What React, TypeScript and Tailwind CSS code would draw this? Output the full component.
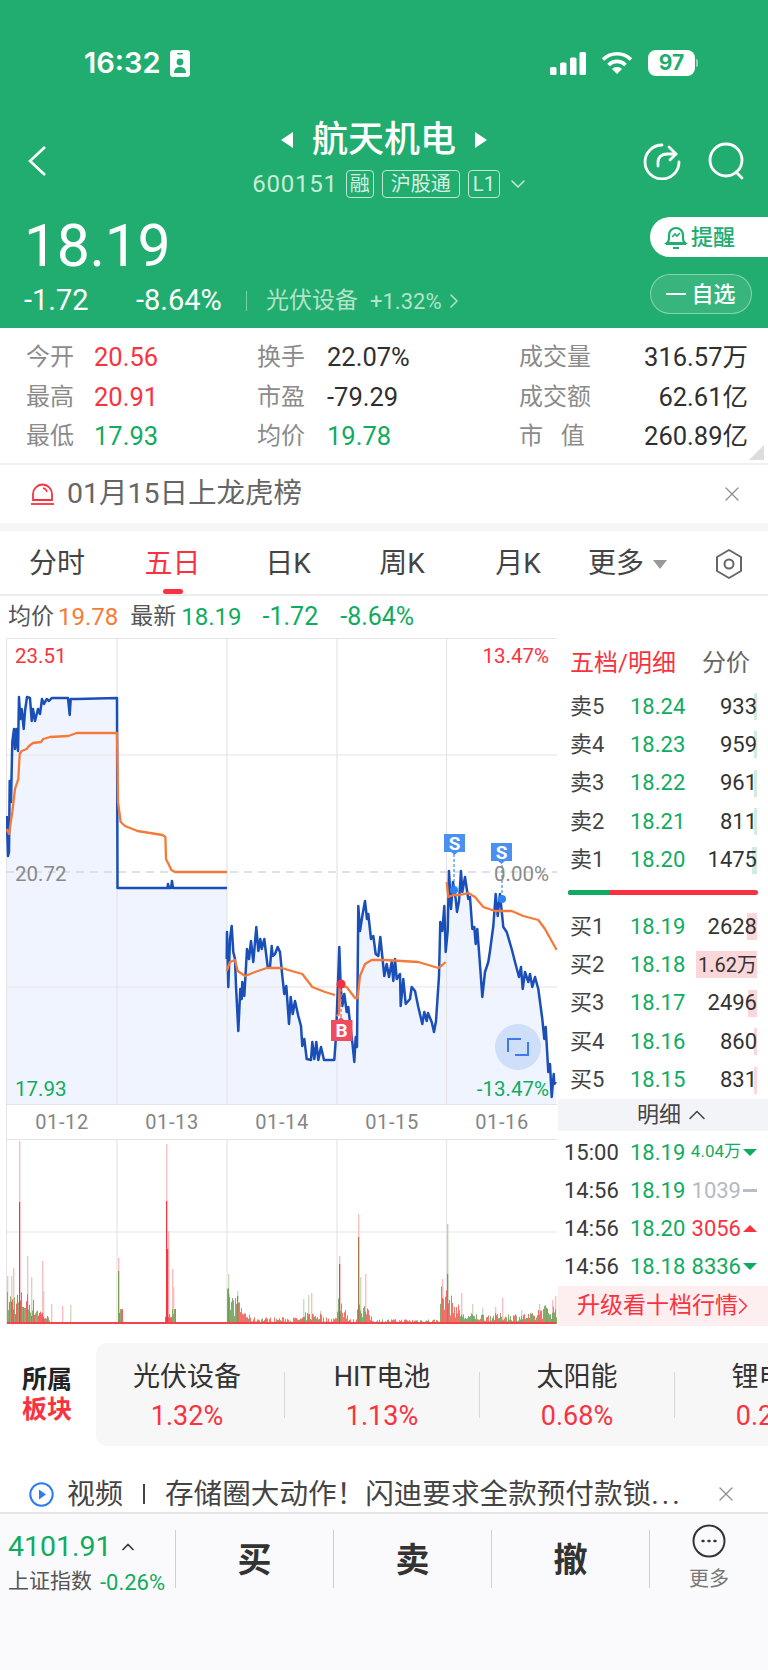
import { ChevronDown, ChevronRight, ChevronUp, X } from "lucide-react";

const RED = "text-[#fa3240]";
const GREEN = "text-[#0fac60]";

const blueA =
  "6.7,817 8,857 9,853 9.7,782 11,803 12.3,743 14,730 15,750 16.3,730 18,752 19,698 20.3,720 21.7,710 23.7,730 25,712 27,698 30,699 31.7,722 33,710 35,722 38,710 40,715 42,700 44,705 46.7,700 49,702 51.7,699 68,699 69.7,716 70.7,700 77,700 117,699 117.5,889 167.5,889 168,885 169,889 171,889 172,882 173,889 227,889";
const blueB =
  "226.7,960 227,933 228.3,988 230,940 231.7,927 233.3,953 235,960 236,987 238.3,1032 240.3,990 241.7,1000 242.3,983 244.3,997 247,950 249,960 251,942 253.3,963 256.3,928 258.3,952 260.3,940 261.7,950 264.3,940 267.7,968 270,968 271.7,947 272.7,957 275,955 277.7,948 280,953 282.3,977 284.3,995 286.3,987 289,1025 290.7,998 292.7,1015 295,1002 298.3,1017 301,1027 302.3,1047 304.3,1040 306.7,1060 311,1061 312.3,1043 314.3,1060 316.3,1043 318.3,1061 321,1048 324,1061 334.3,1061 336,1037 339.3,948 340.7,987 342.3,1007 344.3,995 346.7,1013 348.3,1008 351,1033 352.3,1043 354.3,1063 355.7,1038 357,1048 358.3,907 360,932 362.3,917 365,902 367,920 368.3,915 371,940 373.3,937 375.7,955 378.3,957 380.3,938 384.3,977 386.7,965 389,978 391.7,963 393.3,982 395,960 396.7,980 400,975 400.7,1007 403.3,980 405.7,1005 410,1000 411.7,988 415,992 418.3,1008 422.3,1025 424.3,1013 426.7,1022 428,1014 431.7,1023 434,1033 436,1022 439,977 440.3,923 442.3,932 444.3,907 445.7,953 447.7,932 449,872 451,910 453,883 455.7,900 457,913 459,902 461,872 462.3,893 465,878 468.3,900 470,898 472.3,930 474.3,928 475.7,945 477.3,930 480.3,970 482.3,998 485,973 488.3,963 490,952 493.3,927 495.7,895 497.7,917 500,895 503.3,928 506.7,933 511.7,950 515,963 519,978 521,968 522.7,990 525,973 528.3,983 530,975 532.3,988 535,978 538.3,990 542.3,1020 544.3,1040 545.7,1028 548.3,1073 550,1065 551.7,1098 553.7,1075 554.3,1085 556,1083";
const avgLines = [
  "6.7,830 9,835 12.3,813 15,790 18.3,780 19.7,755 21.7,752 26.7,750 29,747 33,744 41,743 43.3,740 50,738 68.3,737 76.7,734 117,734 118,803 120.7,823 125,827 137.5,832 162.5,836 165.4,838 166,860 171.4,871 175,873 227,873",
  "226.7,972 230,963 235,961 237.7,972 245,977 255,973 266.7,969 281.7,969 291.7,972 302.3,975 312.3,988 325,993 335,996",
  "336.7,1017 339,1015 339.5,987 346.7,988 355,999 357.7,999 360,977 365,965 371.7,961 385,961 418.3,963 438.3,969 442.3,966 445.7,963",
  "446.7,883 448.3,898 453.3,896 460,896 468.3,894 475,898 483.3,908 495,912 511.7,912 523.3,917 538.3,921 545,930 556.7,951",
];

const dayLines = [117, 227, 337, 446.5];

function area(line: string) {
  const p = line.split(" ");
  const first = p[0].split(",")[0];
  const last = p[p.length - 1].split(",")[0];
  return `M${first},1106 L${p.join(" L")} L${last},1106 Z`;
}

// rough volume envelope per x, noise is seeded so the picture stays stable
function envelope(x: number) {
  if (x < 26) return 34;
  if (x < 52) return 34 - (x - 26) * 1.2;
  if (x >= 118 && x < 123) return 16;
  if (x >= 165 && x < 176) return 16;
  if (x >= 227 && x < 250) return 38 - (x - 227) * 1.3;
  if (x >= 250 && x < 337) return x > 303 && x < 322 ? 12 : 7;
  if (x >= 337 && x < 348) return 38 - (x - 337) * 2.4;
  if (x >= 357 && x < 372) return 32 - (x - 357) * 1.6;
  if (x >= 348 && x < 440) return 5;
  if (x >= 440 && x < 462) return 42 - (x - 440) * 1.2;
  if (x >= 462 && x < 538) return 11;
  if (x >= 538) return 20;
  return 0;
}

let seed = 7;
function rnd() {
  seed = (seed * 16807) % 2147483647;
  return seed / 2147483647;
}

const noiseBars: { x: number; h: number; c: string }[] = [];
for (let x = 7; x < 557; x += 1) {
  const env = envelope(x);
  if (env <= 0) continue;
  const r = rnd();
  const c = x < 227 ? (r < 0.45 ? "#7f9f55" : "#f0474c") : r < 0.55 ? "#6f9c55" : "#ee5a50";
  noiseBars.push({ x, h: env * (0.25 + rnd() * 0.75), c });
}

const lightSpikes: [number, number, string][] = [
  [19, 183, "#fdbdc0"], [27, 68, "#fdbdc0"], [42, 63, "#fdbdc0"], [31, 47, "#c9dcc0"], [43, 33, "#c9dcc0"],
  [51, 20, "#fdbdc0"], [62, 18, "#fdbdc0"], [70, 19, "#c9dcc0"], [11, 48, "#c9dcc0"], [13, 56, "#fdbdc0"],
  [7, 48, "#fdbdc0"], [118, 66, "#fdbdc0"], [166, 180, "#fdbdc0"], [168, 93, "#fdbdc0"], [172, 55, "#fdbdc0"],
  [173, 37, "#fdbdc0"], [228, 50, "#c9dcc0"], [237, 33, "#c9dcc0"], [303, 25, "#c9dcc0"], [308, 29, "#c9dcc0"],
  [311, 31, "#fdbdc0"], [320, 13, "#c9dcc0"], [339, 68, "#fdbdc0"], [358, 110, "#fdbdc0"], [360, 47, "#c9dcc0"],
  [365, 50, "#fdbdc0"], [447, 100, "#b9d4ab"], [442, 45, "#fdbdc0"], [461, 31, "#fdbdc0"], [502, 26, "#fdbdc0"],
  [495, 17, "#fdbdc0"], [472, 20, "#c9dcc0"], [482, 16, "#c9dcc0"], [521, 14, "#c9dcc0"], [539, 20, "#c9dcc0"],
  [546, 15, "#fdbdc0"], [552, 24, "#fdbdc0"], [555, 28, "#fdbdc0"],
];
const solidSpikes: [number, number, string][] = [
  [19, 122, "#f23a3f"], [118, 53, "#7f9f55"], [166, 123, "#f8343f"], [167, 75, "#f8343f"], [339, 60, "#ef4044"],
  [358, 87, "#a8744a"], [447, 50, "#6f9c55"], [237, 28, "#6f9c55"], [228, 30, "#6f9c55"],
];

function StatusBar() {
  return (
    <div className="flex items-center justify-between pl-[84px] pr-[70px] pt-[48px] text-white">
      <div className="flex items-center gap-[9px]">
        <span className="text-[29px] leading-[30px] font-semibold [font-family:Inter,sans-serif]">16:32</span>
        <svg width="20" height="27" viewBox="0 0 20 27">
          <rect width="20" height="27" rx="3.5" fill="#fff" />
          <rect x="7" y="3" width="6" height="1.6" rx="0.8" fill="#21ad6f" />
          <circle cx="10" cy="12" r="3.4" fill="#21ad6f" />
          <path d="M4 23c0-4 2.5-6 6-6s6 2 6 6z" fill="#21ad6f" />
        </svg>
      </div>
      <div className="flex items-center gap-[15px]">
        <svg width="36" height="23" viewBox="0 0 36 23" fill="#fff">
          <rect x="0" y="15" width="6.5" height="8" rx="1.6" />
          <rect x="10" y="10.5" width="6.5" height="12.5" rx="1.6" />
          <rect x="20" y="5.5" width="6.5" height="17.5" rx="1.6" />
          <rect x="29.5" y="0" width="6.5" height="23" rx="1.6" />
        </svg>
        <svg width="32" height="24" viewBox="0 0 32 24" fill="none" stroke="#fff" strokeWidth="3.6">
          <path d="M2 8.5c8-7.6 20-7.6 28 0" />
          <path d="M7.5 14c5-4.8 12-4.8 17 0" />
          <path d="M16 23l-5-5c2.8-2.6 7.2-2.6 10 0z" fill="#fff" stroke="none" />
        </svg>
        <div className="flex items-center gap-[1px]">
          <div className="w-[47px] h-[26px] rounded-[8px] bg-white flex items-center justify-center text-[#21ad6f] text-[21px] font-bold [font-family:Inter,sans-serif]">
            97
          </div>
          <div className="w-[2px] h-[8px] rounded-r bg-white/50" />
        </div>
      </div>
    </div>
  );
}

function Tag({ children }: { children: React.ReactNode }) {
  return (
    <span className="h-[28px] px-[3px] border border-[#c3e6d3] rounded-[4px] flex items-center text-[20px] leading-none text-[#d5f0e2]">
      {children}
    </span>
  );
}

function Header() {
  return (
    <header className="h-[328px] bg-[#21ad6f] text-white shrink-0">
      <StatusBar />
      <div className="flex items-center h-[92px] mt-[33px]">
        <div className="w-[130px] pl-[26px] mt-[8px]">
          <svg width="22" height="32" viewBox="0 0 22 32" fill="none" stroke="#fff" strokeWidth="2.6">
            <path d="M19 2L4 16l15 14" />
          </svg>
        </div>
        <div className="flex-1 flex flex-col items-center">
          <div className="flex items-center gap-[19px] h-[48px]">
            <span className="w-0 h-0 border-y-[8px] border-y-transparent border-r-[12px] border-r-white" />
            <span className="text-[36px] leading-[44px] font-medium">航天机电</span>
            <span className="w-0 h-0 border-y-[8px] border-y-transparent border-l-[12px] border-l-white" />
          </div>
          <div className="flex items-center gap-[8px] h-[30px] mt-[5px] pl-[14px] text-[#c9ecd9] whitespace-nowrap">
            <span className="text-[24px] leading-none tracking-[0.8px]">600151</span>
            <Tag>融</Tag>
            <Tag>
              <span className="px-[5px]">沪股通</span>
            </Tag>
            <Tag>
              <span className="px-[1px]">L1</span>
            </Tag>
            <ChevronDown size={24} strokeWidth={1.5} className="-ml-[2px]" />
          </div>
        </div>
        <div className="w-[130px] flex items-center justify-end gap-[27px] pr-[22px] mt-[8px]">
          <svg width="38" height="38" viewBox="0 0 38 38" fill="none" stroke="#fff" strokeWidth="2.8" strokeLinecap="round">
            <path d="M36 20a17 17 0 1 1-17-17" />
            <path d="M15 24v-4c0-5 4-8 9-8h7" />
            <path d="M26 5l7 7-6 6" />
          </svg>
          <svg width="38" height="38" viewBox="0 0 38 38" fill="none" stroke="#fff" strokeWidth="2.8" strokeLinecap="round">
            <circle cx="18" cy="18" r="16" />
            <path d="M28 30l6 6" />
          </svg>
        </div>
      </div>
      <div className="flex justify-between items-start">
        <div className="pl-[24px] pt-[10px]">
          <div className="text-[59px] leading-[66px] tracking-[-0.4px]">18.19</div>
          <div className="flex items-center h-[36px] mt-[4px]">
            <span className="text-[29px] w-[112px]">-1.72</span>
            <span className="text-[29px] w-[110px]">-8.64%</span>
            <span className="w-px h-[20px] bg-white/40" />
            <span className="ml-[19px] text-[23px] text-[#b4e2ca]">光伏设备</span>
            <span className="ml-[12px] text-[22px] text-[#b4e2ca]">+1.32%</span>
            <ChevronRight size={24} strokeWidth={1.5} className="text-[#b4e2ca]" />
          </div>
        </div>
        <div className="flex flex-col items-end pt-[14px]">
          <div className="w-[118px] h-[40px] bg-white rounded-l-[20px] flex items-center pl-[14px] gap-[3px] text-[#21ad6f] text-[22px] font-medium">
            <svg width="24" height="26" viewBox="0 0 24 26" fill="none" stroke="#21ad6f" strokeWidth="2.2">
              <path d="M3 19c2-1.5 2-3 2-8a7 7 0 0 1 14 0c0 5 0 6.5 2 8z" />
              <path d="M2 20h20M9 24h6" />
              <path d="M8 13l3-3 2 2 3-3" strokeWidth="1.6" />
            </svg>
            提醒
          </div>
          <div className="w-[102px] h-[40px] mr-[16px] mt-[17px] border border-white/40 bg-white/10 rounded-[20px] flex items-center justify-center text-[22px] font-medium">
            <span className="w-[20px] h-[2px] bg-white mr-[5px]" />
            自选
          </div>
        </div>
      </div>
    </header>
  );
}

function Stat({ label, value, color, labelW, valueRight }: { label: string; value: string; color: string; labelW: string; valueRight?: boolean }) {
  return (
    <div className="flex items-center h-[39.8px]">
      <span className={`${labelW} text-[24px] text-[#8b8b8b] whitespace-pre`}>{label}</span>
      <span className={`text-[25.5px] ${color} ${valueRight ? "flex-1 text-right" : ""}`}>{value}</span>
    </div>
  );
}

function Stats() {
  const col = "flex flex-col";
  return (
    <section className="relative h-[137px] border-b-2 border-[#f0f0f0] pt-[9px] pl-[26px] pr-[20px] flex shrink-0">
      <div className={`${col} w-[231px]`}>
        <Stat label="今开" value="20.56" color={RED} labelW="w-[68px]" />
        <Stat label="最高" value="20.91" color={RED} labelW="w-[68px]" />
        <Stat label="最低" value="17.93" color={GREEN} labelW="w-[68px]" />
      </div>
      <div className={`${col} w-[262px]`}>
        <Stat label="换手" value="22.07%" color="text-[#2f2f2f]" labelW="w-[70px]" />
        <Stat label="市盈" value="-79.29" color="text-[#2f2f2f]" labelW="w-[70px]" />
        <Stat label="均价" value="19.78" color={GREEN} labelW="w-[70px]" />
      </div>
      <div className={`${col} flex-1`}>
        <Stat label="成交量" value="316.57万" color="text-[#2f2f2f]" labelW="w-[90px]" valueRight />
        <Stat label="成交额" value="62.61亿" color="text-[#2f2f2f]" labelW="w-[90px]" valueRight />
        <Stat label={"市   值"} value="260.89亿" color="text-[#2f2f2f]" labelW="w-[90px]" valueRight />
      </div>
      <span className="absolute right-[4px] bottom-[3px] w-0 h-0 border-l-[15px] border-l-transparent border-b-[15px] border-b-[#dcdcdc]" />
    </section>
  );
}

function Notice() {
  return (
    <div className="h-[58px] flex items-center pl-[30px] pr-[24px] border-b-[8px] border-[#f5f6f8] box-content shrink-0">
      <svg width="25" height="26" viewBox="0 0 25 26" fill="none" stroke="#fa3240" strokeWidth="1.8">
        <path d="M3 19v-6a9.5 9.5 0 0 1 19 0v6z" />
        <path d="M1 23h23" />
        <path d="M13 7c2 .5 3.5 2 4 4" strokeWidth="1.4" />
      </svg>
      <span className="ml-[12px] pt-[1px] text-[28.5px] text-[#666]">01月15日上龙虎榜</span>
      <X size={24} strokeWidth={1.3} className="ml-auto text-[#8e8e8e]" />
    </div>
  );
}

function Tabs() {
  const items: [string, string][] = [
    ["分时", "w-[112px]"],
    ["五日", "w-[119px]"],
    ["日K", "w-[112px]"],
    ["周K", "w-[116px]"],
    ["月K", "w-[116px]"],
  ];
  return (
    <div className="h-[60px] pt-[3px] flex items-center border-b-2 border-[#ececec] pl-[1px] text-[28px] text-[#444] shrink-0 box-content">
      {items.map(([t, w], i) => (
        <div key={t} className={`${w} relative h-full flex items-center justify-center ${i === 1 ? RED : ""}`}>
          {t}
          {i === 1 && <span className="absolute bottom-0 w-[20px] h-[5px] rounded-full bg-[#fa3240]" />}
        </div>
      ))}
      <div className="flex items-center ml-[2px]">
        <span className="ml-[10px]">更多</span>
        <span className="ml-[9px] w-0 h-0 border-x-[7px] border-x-transparent border-t-[9px] border-t-[#999]" />
      </div>
      <svg width="28" height="32" viewBox="0 0 28 32" fill="none" stroke="#666" strokeWidth="2" className="ml-[48px]">
        <path d="M14 2l12 7v14l-12 7-12-7V9z" strokeLinejoin="round" />
        <circle cx="14" cy="16" r="4.5" />
      </svg>
    </div>
  );
}

function Summary() {
  return (
    <div className="h-[42px] flex items-center pl-[8px] text-[23px] shrink-0">
      <span className="text-[#555]">均价</span>
      <span className="ml-[4px] text-[24px] text-[#f47c36]">19.78</span>
      <span className="ml-[12px] text-[#555]">最新</span>
      <span className={`ml-[5px] text-[24px] ${GREEN}`}>18.19</span>
      <span className={`ml-[21px] text-[25px] ${GREEN}`}>-1.72</span>
      <span className={`ml-[22px] text-[25px] ${GREEN}`}>-8.64%</span>
    </div>
  );
}

function PriceChart() {
  return (
    <div className="relative h-[467px]">
      <svg width="551" height="467" viewBox="6 639 551 467" className="block">
        <path d={area(blueA)} fill="#f0f4fe" />
        <path d={area(blueB)} fill="#f0f4fe" />
        <g stroke="#e4e4e4" strokeWidth="1.2">
          <path d="M6.5 639V1106M6 639.5H557M6 756H557M6 988H557M6 1105.5H557" fill="none" />
          {dayLines.map((x) => (
            <line key={x} x1={x} x2={x} y1="639" y2="1106" />
          ))}
        </g>
        <line x1="6" x2="557" y1="873" y2="873" stroke="#d3d8e0" strokeWidth="1.3" strokeDasharray="8 6" />
        <polyline points={blueA} fill="none" stroke="#1a4fb8" strokeWidth="2.5" strokeLinejoin="round" />
        <polyline points={blueB} fill="none" stroke="#1a4fb8" strokeWidth="2.5" strokeLinejoin="round" />
        {avgLines.map((l) => (
          <polyline key={l} points={l} fill="none" stroke="#f57a3a" strokeWidth="2.3" strokeLinejoin="round" />
        ))}
        <circle cx="518" cy="1048" r="23" fill="#c9d9f8" fillOpacity="0.85" />
        <path d="M508 1053v-13h13M528 1043v13h-13" fill="none" stroke="#3d7bea" strokeWidth="2" />
        <line x1="341" x2="341" y1="985" y2="1022" stroke="#f6626f" strokeWidth="1.3" strokeDasharray="3 2" />
        <circle cx="341" cy="985" r="4.5" fill="#f52f40" />
        <path d="M331 1021h7l3-3 3 3h8.5v21H331z" fill="#f04c5f" />
        <text x="341.5" y="1038" textAnchor="middle" fill="#fff" fontSize="19" fontWeight="700">B</text>
        <line x1="454" x2="454" y1="855" y2="891" stroke="#3d8bf5" strokeWidth="1.2" strokeDasharray="3 2" />
        <circle cx="454" cy="891" r="4" fill="#2c83f2" />
        <path d="M444 835h21v18h-7l-3.5 3-3.5-3h-7z" fill="#4a90f0" />
        <text x="454.5" y="851" textAnchor="middle" fill="#fff" fontSize="19" fontWeight="700">S</text>
        <line x1="502" x2="502" y1="866" y2="900" stroke="#3d8bf5" strokeWidth="1.2" strokeDasharray="3 2" />
        <circle cx="502" cy="900" r="4" fill="#2c83f2" />
        <path d="M491 844h21v18h-7l-3.5 3-3.5-3h-7z" fill="#4a90f0" />
        <text x="501.5" y="860" textAnchor="middle" fill="#fff" fontSize="19" fontWeight="700">S</text>
      </svg>
      <span className={`absolute left-[9px] top-[3px] text-[20.5px] ${RED}`}>23.51</span>
      <span className={`absolute right-[9px] top-[3px] text-[20.5px] ${RED}`}>13.47%</span>
      <span className="absolute left-[9px] top-[221px] text-[20.5px] text-[#8a8a8a]">20.72</span>
      <span className="absolute right-[9px] top-[221px] text-[20.5px] text-[#8a8a8a]">0.00%</span>
      <span className={`absolute left-[9px] bottom-0 text-[20.5px] ${GREEN}`}>17.93</span>
      <span className={`absolute right-[9px] bottom-0 text-[20.5px] ${GREEN}`}>-13.47%</span>
    </div>
  );
}

function VolumeChart() {
  return (
    <svg width="551" height="185" viewBox="6 1141 551 185" className="block">
      <g stroke="#e6e6e6" strokeWidth="1.2">
        <path d="M6.5 1141V1325M6 1233H557" fill="none" />
        {dayLines.map((x) => (
          <line key={x} x1={x} x2={x} y1="1141" y2="1325" />
        ))}
      </g>
      {lightSpikes.map(([x, h, c]) => (
        <rect key={`l${x}`} x={x} y={1325 - h} width="1.4" height={h} fill={c} />
      ))}
      {noiseBars.map((b) => (
        <rect key={b.x} x={b.x} y={1325 - b.h} width="1" height={b.h} fill={b.c} fillOpacity="0.85" />
      ))}
      {solidSpikes.map(([x, h, c]) => (
        <rect key={`s${x}`} x={x} y={1325 - h} width="1.2" height={h} fill={c} />
      ))}
      <rect x="7" y="1323" width="549" height="2" fill="#f4434a" />
    </svg>
  );
}

function LeftPanel() {
  const dates = ["01-12", "01-13", "01-14", "01-15", "01-16"];
  return (
    <div className="w-[558px] pl-[6px] shrink-0">
      <PriceChart />
      <div className="h-[35px] w-[551px] flex border-l border-[#e4e4e4] border-b border-b-[#e4e4e4]">
        {dates.map((d) => (
          <div key={d} className="w-[110px] text-center text-[20px] leading-[34px] tracking-[0.6px] text-[#858585]">
            {d}
          </div>
        ))}
      </div>
      <VolumeChart />
    </div>
  );
}

function QuoteRow({ label, price, vol, bar, sell, small }: { label: string; price: string; vol: string; bar: number; sell: boolean; small?: boolean }) {
  return (
    <div className="relative h-[38.4px] flex items-center pl-[12px] pr-[11px] text-[22px]">
      <span
        className={`absolute right-[11px] top-[6px] h-[27px] ${sell ? "bg-[#d3ebdd]" : "bg-[#fbd7d9]"}`}
        style={{ width: bar }}
      />
      <span className="relative w-[60px] text-[#444]">{label}</span>
      <span className={`relative ${GREEN}`}>{price}</span>
      <span className={`relative ml-auto text-[#333] ${small ? "text-[20px]" : ""}`}>{vol}</span>
    </div>
  );
}

function TickRow({ time, price, vol, color, mark, small }: { time: string; price: string; vol: string; color: string; mark: "down" | "up" | "flat"; small?: boolean }) {
  return (
    <div className="h-[38.3px] flex items-center pl-[6px] pr-[11px] text-[22px]">
      <span className="w-[66px] text-[#3a3a3a]">{time}</span>
      <span className={GREEN}>{price}</span>
      <span className={`ml-auto ${color} ${small ? "text-[17px]" : ""}`}>{vol}</span>
      {mark === "down" && <span className="ml-[2px] w-0 h-0 border-x-[7px] border-x-transparent border-t-[7px] border-t-[#0fac60]" />}
      {mark === "up" && <span className="ml-[2px] w-0 h-0 border-x-[7px] border-x-transparent border-b-[7px] border-b-[#fa3240]" />}
      {mark === "flat" && <span className="ml-[2px] w-[14px] h-[3px] bg-[#b9bec6]" />}
    </div>
  );
}

function RightPanel() {
  return (
    <div className="flex-1 flex flex-col">
      <div className="h-[49px] flex items-center justify-between pl-[12px] pr-[18px] text-[24px] shrink-0">
        <span className={RED}>五档/明细</span>
        <span className="text-[#666]">分价</span>
      </div>
      <div>
        <QuoteRow label="卖5" price="18.24" vol="933" bar={3} sell />
        <QuoteRow label="卖4" price="18.23" vol="959" bar={3} sell />
        <QuoteRow label="卖3" price="18.22" vol="961" bar={3} sell />
        <QuoteRow label="卖2" price="18.21" vol="811" bar={3} sell />
        <QuoteRow label="卖1" price="18.20" vol="1475" bar={5} sell />
      </div>
      <div className="h-[5px] mx-[10px] mt-[11px] mb-[12px] rounded-full bg-[#fa3240] overflow-hidden shrink-0">
        <div className="h-full w-[42px] bg-[#0fac60]" />
      </div>
      <div>
        <QuoteRow label="买1" price="18.19" vol="2628" bar={10} sell={false} />
        <QuoteRow label="买2" price="18.18" vol="1.62万" bar={61} sell={false} small />
        <QuoteRow label="买3" price="18.17" vol="2496" bar={9} sell={false} />
        <QuoteRow label="买4" price="18.16" vol="860" bar={3} sell={false} />
        <QuoteRow label="买5" price="18.15" vol="831" bar={3} sell={false} />
      </div>
      <div className="h-[32px] pl-[22px] bg-[#f2f4f8] flex items-center justify-center text-[22px] text-[#444] shrink-0">
        明细
        <ChevronUp size={28} strokeWidth={1.3} className="ml-[2px]" />
      </div>
      <div className="pt-[2px]">
        <TickRow time="15:00" price="18.19" vol="4.04万" color={GREEN} mark="down" small />
        <TickRow time="14:56" price="18.19" vol="1039" color="text-[#b5bac2]" mark="flat" />
        <TickRow time="14:56" price="18.20" vol="3056" color={RED} mark="up" />
        <TickRow time="14:56" price="18.18" vol="8336" color={GREEN} mark="down" />
      </div>
      <div className={`h-[40px] pl-[8px] bg-[#fdeeef] flex items-center justify-center text-[23px] shrink-0 ${RED}`}>
        升级看十档行情
        <ChevronRight size={28} strokeWidth={1.3} className="-ml-[9px]" />
      </div>
    </div>
  );
}

function Sectors() {
  const items: [string, string][] = [
    ["光伏设备", "1.32%"],
    ["HIT电池", "1.13%"],
    ["太阳能", "0.68%"],
    ["锂电池", "0.25%"],
  ];
  return (
    <div className="h-[103px] mt-[18px] flex items-center pl-[22px] shrink-0">
      <div className="w-[74px] text-[25px] leading-[30px] font-bold text-[#222]">
        所属
        <div className={RED}>板块</div>
      </div>
      <div className="flex-1 h-full bg-[#f7f7f7] rounded-l-[10px] overflow-hidden flex items-center">
        <div className="flex items-center -ml-[6px]">
          {items.map(([name, pct], i) => (
            <div key={name} className="flex items-center shrink-0">
              <div className="w-[194px] pt-[4px] flex flex-col items-center">
                <span className="text-[27px] leading-[36px] text-[#333] whitespace-nowrap">{name}</span>
                <span className={`text-[27px] leading-[36px] mt-[3px] ${RED}`}>{pct}</span>
              </div>
              {i < 3 && <span className="w-px h-[46px] bg-[#d8d8d8]" />}
            </div>
          ))}
        </div>
      </div>
    </div>
  );
}

function News() {
  return (
    <div className="h-[36px] mt-[30px] flex items-center pl-[29px] pr-[30px] text-[28px] text-[#444] shrink-0">
      <svg width="25" height="25" viewBox="0 0 25 25" className="shrink-0">
        <circle cx="12.5" cy="12.5" r="11.2" fill="none" stroke="#2f7cf0" strokeWidth="2" />
        <path d="M10 7.5l7 5-7 5z" fill="#2f7cf0" />
      </svg>
      <span className="ml-[13px] pt-[1px]">视频</span>
      <span className="ml-[20px] w-[2px] h-[20px] bg-[#444]" />
      <span className="ml-[20px] pt-[1px] whitespace-nowrap text-[28.6px]">
        存储圈大动作！闪迪要求全款预付款锁<span className="tracking-[3px]">...</span>
      </span>
      <X size={24} strokeWidth={1.3} className="ml-auto shrink-0 text-[#8e8e8e]" />
    </div>
  );
}

function Footer() {
  const actions = ["买", "卖", "撤"];
  return (
    <footer className="flex-1 bg-[#fafafc] border-t-2 border-[#e5e5e8] flex items-start pt-[16px]">
      <div className="w-[176px] h-[58px] pl-[8px] border-r border-[#cfcfd2] shrink-0">
        <div className={`flex items-center h-[36px] -mt-[1px] text-[28.5px] ${GREEN}`}>
          4101.91
          <ChevronUp size={20} strokeWidth={2} className="ml-[6px] text-[#333]" />
        </div>
        <div className="flex items-center h-[34px] text-[21px]">
          <span className="text-[#555]">上证指数</span>
          <span className={`ml-[8px] text-[22px] ${GREEN}`}>-0.26%</span>
        </div>
      </div>
      {actions.map((a) => (
        <div key={a} className="w-[158px] h-[58px] pt-[2px] border-r border-[#cfcfd2] flex items-center justify-center text-[34px] font-bold text-[#333] shrink-0">
          {a}
        </div>
      ))}
      <div className="flex-1 flex flex-col items-center -mt-[6px]">
        <svg width="34" height="34" viewBox="0 0 34 34" fill="none" stroke="#333" strokeWidth="2">
          <circle cx="17" cy="17" r="15.5" />
          <path d="M10.5 17h1M16.5 17h1M22.5 17h1" strokeLinecap="round" strokeWidth="2.4" />
        </svg>
        <span className="mt-[6px] text-[20px] text-[#777]">更多</span>
      </div>
    </footer>
  );
}

export default function App() {
  return (
    <div className="w-[768px] h-[1670px] bg-white overflow-hidden flex flex-col [font-family:Roboto,'Noto_Sans_CJK_SC',sans-serif]">
      <Header />
      <Stats />
      <Notice />
      <Tabs />
      <Summary />
      <div className="flex h-[687px] shrink-0">
        <LeftPanel />
        <RightPanel />
      </div>
      <Sectors />
      <News />
      <Footer />
    </div>
  );
}
